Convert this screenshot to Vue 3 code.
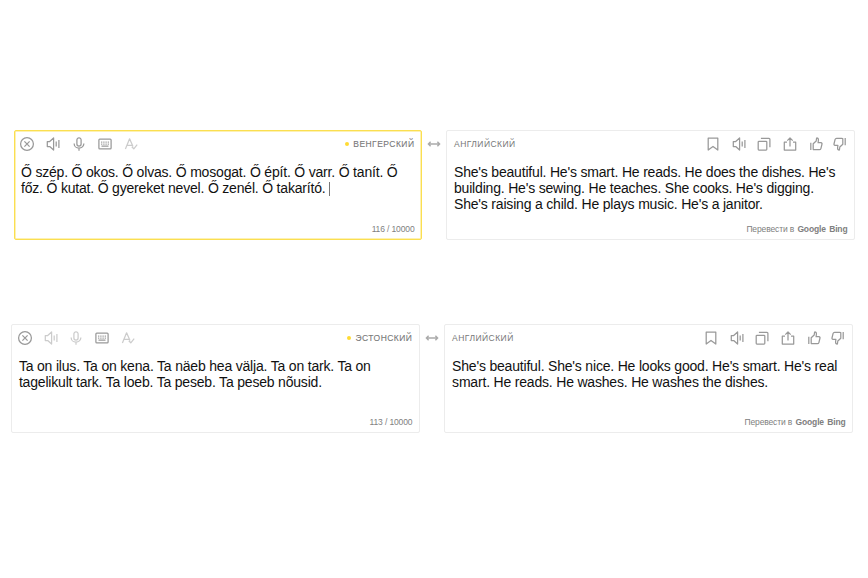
<script setup>
const icons = {
  close: 'M8 1.6a6.4 6.4 0 1 0 0 12.8a6.4 6.4 0 1 0 0-12.8M5.4 5.4l5.2 5.2M10.6 5.4l-5.2 5.2',
  sound: 'M2.3 5.5H4.7L8.6 2V14L4.7 10.5H2.3ZM11.2 5.6V10.4M13.9 4V12',
  mic: 'M8 1.8a2.1 2.1 0 0 0-2.1 2.1v4a2.1 2.1 0 0 0 4.2 0v-4A2.1 2.1 0 0 0 8 1.8M3.2 7.4v.5a4.8 4.2 0 0 0 9.6 0v-.5M8 12.1v2.6',
  keyboard: 'M2.8 3.2H13.2Q14.1 3.2 14.1 4.1V12Q14.1 12.9 13.2 12.9H2.8Q1.9 12.9 1.9 12V4.1Q1.9 3.2 2.8 3.2M4.1 6h1.2M6.3 6h1.2M8.5 6h1.2M10.7 6h1.2M4.1 8h1.2M6.3 8h1.2M8.5 8h1.2M10.7 8h1.2M4.5 10h7',
  spell: 'M2.4 13L6.6 2.8L10 10.6M4 9.4h5M8.8 10.7l2 2.1l3.4-4.2',
  bookmark: 'M3.2 2H12.8V14L8 10.5L3.2 14Z',
  copy: 'M3 5.3H10Q10.8 5.3 10.8 6.1V13.2Q10.8 14 10 14H3Q2.2 14 2.2 13.2V6.1Q2.2 5.3 3 5.3M4.9 2.3H13Q13.9 2.3 13.9 3.2V11.2',
  share: 'M5 6.2H2.3V14H13.7V6.2H11M8 10.5V2M5.3 4.6L8 1.9L10.7 4.6',
  up: 'M2.8 6.8V14M5.2 13.4V7.8L8.2 5L8.6 2Q10.6 1.9 10.4 4.2L10.1 6.7H13Q14.2 6.8 14 8L12.9 12.6Q12.5 13.7 11.5 13.7H6.4Q5.2 13.7 5.2 13.4',
  down: 'M13.2 9.2V2M10.8 2.6V8.2L7.8 11L7.4 14Q5.4 14.1 5.6 11.8L5.9 9.3H3Q1.8 9.2 2 8L3.1 3.4Q3.5 2.3 4.5 2.3H9.6Q10.8 2.3 10.8 2.6',
}
const inputTools = ['close', 'sound', 'mic', 'keyboard', 'spell']
const outputTools = ['bookmark', 'sound', 'copy', 'share', 'up', 'down']
const rows = [
  {
    id: 'hu', focused: true, lang: 'Венгерский', count: '116 / 10000', faded: ['spell'],
    source: ['Ő szép. Ő okos. Ő olvas. Ő mosogat. Ő épít. Ő varr. Ő tanít. Ő', 'főz. Ő kutat. Ő gyereket nevel. Ő zenél. Ő takarító.'],
    result: ["She's beautiful. He's smart. He reads. He does the dishes. He's", "building. He's sewing. He teaches. She cooks. He's digging.", "She's raising a child. He plays music. He's a janitor."],
  },
  {
    id: 'et', focused: false, lang: 'Эстонский', count: '113 / 10000', faded: ['sound', 'mic', 'spell'],
    source: ['Ta on ilus. Ta on kena. Ta näeb hea välja. Ta on tark. Ta on', 'tagelikult tark. Ta loeb. Ta peseb. Ta peseb nõusid.'],
    result: ["She's beautiful. She's nice. He looks good. He's smart. He's real", 'smart. He reads. He washes. He washes the dishes.'],
  },
]
</script>

<template>
  <main class="page">
    <section v-for="row in rows" :key="row.id" class="translator" :class="row.id">
      <div class="panel source" :class="{ focused: row.focused }">
        <header class="bar">
          <div class="tools">
            <svg v-for="name in inputTools" :key="name" class="icon" :class="{ faded: row.faded.includes(name) }" viewBox="0 0 16 16"><path :d="icons[name]" /></svg>
          </div>
          <span class="lang detected">{{ row.lang }}</span>
        </header>
        <div class="text">
          <div v-for="(line, i) in row.source" :key="i" class="line">{{ line }}<i v-if="row.focused && i === row.source.length - 1" class="caret"></i></div>
        </div>
        <footer class="foot">{{ row.count }}</footer>
      </div>
      <svg class="swap" viewBox="0 0 14 8"><path d="M1.4 4H12.6M3.6 1.8L1.4 4L3.6 6.2M10.4 1.8L12.6 4L10.4 6.2" /></svg>
      <div class="panel result">
        <header class="bar">
          <span class="lang">Английский</span>
          <div class="tools">
            <svg v-for="name in outputTools" :key="name" class="icon" :class="name" viewBox="0 0 16 16"><path :d="icons[name]" /></svg>
          </div>
        </header>
        <div class="text">
          <div v-for="(line, i) in row.result" :key="i" class="line">{{ line }}</div>
        </div>
        <footer class="foot">Перевести в <b>Google</b> <b>Bing</b></footer>
      </div>
    </section>
  </main>
</template>

<style>
body { background: #fff; }
</style>

<style scoped>
.page {
  box-sizing: border-box;
  width: 868px;
  height: 578px;
  padding-top: 130px;
  overflow: hidden;
  font-family: "Liberation Sans", Arial, sans-serif;
}
.translator { display: flex; width: 842px; height: 110px; margin-left: 13.5px; }
.translator.et { margin: 84px 0 0 11.4px; height: 109px; }
.panel {
  box-sizing: border-box;
  display: flex;
  flex-direction: column;
  width: 408.5px;
  flex: none;
  border: 1px solid #ececec;
  border-radius: 2px;
  padding: 0 7px 0 6.5px;
}
.panel.focused { border-color: #fbdf50; box-shadow: inset 0 0 0 0.5px #fbe36a; }
.bar { display: flex; justify-content: space-between; align-items: center; height: 26px; }
.tools { display: flex; align-items: center; gap: 9.8px; }
.source .tools { margin-left: -1.6px; }
.et .source .tools { margin-left: -2px; }
.result .tools { margin-right: -1.6px; }
.icon { width: 16px; height: 16px; fill: none; stroke: #999; stroke-width: 1.25; stroke-linejoin: round; }
.icon.faded { stroke: #ccc; }
.icon.down { margin-left: -1.6px; }
.lang { font-size: 8.5px; letter-spacing: 0.46px; color: #777; text-transform: uppercase; white-space: nowrap; }
.result .lang { padding-left: 0.5px; }
.detected { display: flex; align-items: center; gap: 4px; margin-right: -0.5px; -webkit-text-stroke: 0.1px #777; }
.detected::before { content: ""; width: 4.5px; height: 4.5px; border-radius: 50%; background: #ffdb33; }
.text { margin-top: 7px; font-size: 14px; letter-spacing: -0.19px; line-height: 16.2px; color: #111; white-space: nowrap; }
.result .text { padding-left: 0.5px; }
.caret { display: inline-block; width: 1px; height: 14px; margin-left: 3px; background: #777; vertical-align: -3px; }
.foot { margin-top: auto; padding-bottom: 5px; font-size: 8.5px; letter-spacing: -0.13px; line-height: 10px; color: #808080; text-align: right; }
.source .foot { margin-right: -0.5px; }
.result .foot { margin-right: -1px; }
.foot b { margin-left: 1px; }
.swap { flex: none; width: 14px; height: 8px; margin: 9.5px 5px 0; fill: none; stroke: #aaa; stroke-width: 1.4; }
.et .swap { margin-right: 5.2px; }
</style>
